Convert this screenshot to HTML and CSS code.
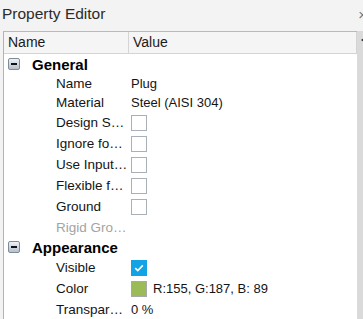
FILE: index.html
```html
<!DOCTYPE html>
<html lang="en">
<head>
    <meta charset="UTF-8">
    <title>Property Editor</title>
    <link rel="stylesheet" href="styles.css">
</head>
<body>
    <div class="panel">
        <div class="titlebar">
            <span class="title">Property Editor</span>
            <span class="close">&times;</span>
        </div>
        <div class="grid">
            <div class="main">
                <div class="head">
                    <div class="hcell hname">Name</div>
                    <div class="hcell">Value</div>
                </div>
                <div class="rows">
                    <!-- General -->
                    <div class="group h20"><span class="toggle"></span><span class="glabel">General</span></div>
                    <div class="row h19"><div class="label">Name</div><div class="value">Plug</div></div>
                    <div class="row h19"><div class="label">Material</div><div class="value">Steel (AISI 304)</div></div>
                    <div class="row h21"><div class="label">Design S…</div><div class="value"><span class="check"></span></div></div>
                    <div class="row h21"><div class="label">Ignore fo…</div><div class="value"><span class="check"></span></div></div>
                    <div class="row h21"><div class="label">Use Input…</div><div class="value"><span class="check"></span></div></div>
                    <div class="row h21"><div class="label">Flexible f…</div><div class="value"><span class="check"></span></div></div>
                    <div class="row h21"><div class="label">Ground</div><div class="value"><span class="check"></span></div></div>
                    <div class="row h20"><div class="label disabled">Rigid Gro…</div><div class="value"></div></div>
                    <!-- Appearance -->
                    <div class="group h20"><span class="toggle"></span><span class="glabel">Appearance</span></div>
                    <div class="row h21"><div class="label">Visible</div><div class="value"><span class="check on">
                        <svg width="10" height="8" viewBox="0 0 10 8"><path d="M1.2 4.2 L3.8 6.6 L8.8 1.4" fill="none" stroke="#fff" stroke-width="1.6"/></svg>
                    </span></div></div>
                    <div class="row h21"><div class="label">Color</div><div class="value"><span class="swatch"></span><span class="rgb">R:155, G:187, B: 89</span></div></div>
                    <div class="row h20"><div class="label">Transpar…</div><div class="value">0 %</div></div>
                    <div class="group h20"><span class="toggle"></span><span class="glabel"></span></div>
                </div>
            </div>
            <div class="scroll"><span class="arrow"></span></div>
        </div>
    </div>
</body>
</html>
```

FILE: styles.css
```css
*{
    margin: 0;
    padding: 0;
    box-sizing: border-box;
}
html, body{
    width: 363px;
    height: 319px;
    overflow: hidden;
    background-color: #f3f3f3;
    font-family: "Liberation Sans", Arial, sans-serif;
    color: #111;
}
.panel{
    width: 363px;
    height: 319px;
    display: flex;
    flex-direction: column;
}

/* title */
.titlebar{
    height: 31px;
    display: flex;
    align-items: flex-start;
    justify-content: space-between;
    padding-left: 2px;
    padding-top: 5px;
}
.title{
    font-size: 15.5px;
    color: #2b2b2b;
}
.close{
    font-size: 15px;
    color: #777;
    margin-right: -4px;
    margin-top: 1px;
}

/* grid */
.grid{
    flex: 1;
    display: flex;
    padding-left: 3px;
    min-height: 0;
}
.main{
    width: 354px;
    border-left: 1px solid #b3b3b3;
    border-top: 1px solid #b9b9b9;
    display: flex;
    flex-direction: column;
    min-height: 0;
}
.head{
    height: 22px;
    display: flex;
    background-color: #f5f5f5;
    border-bottom: 1px solid #d4d4d4;
    border-right: 1px solid #d4d4d4;
    font-size: 14px;
    color: #1a1a1a;
}
.hcell{
    padding-left: 4px;
    line-height: 21px;
}
.hcell.hname{
    width: 125px;
    border-right: 1px solid #d4d4d4;
}
.rows{
    flex: 1;
    background-color: #fff;
    overflow: hidden;
}
.scroll{
    width: 6px;
    background-color: #dadada;
    position: relative;
}
.scroll .arrow{
    position: absolute;
    top: 7px;
    left: 4px;
    width: 0;
    height: 0;
    border-top: 2px solid transparent;
    border-bottom: 2px solid transparent;
    border-right: 3px solid #222;
}

/* rows */
.h19{ height: 19px; }
.h20{ height: 20px; }
.h21{ height: 21px; }
.group{
    display: flex;
    align-items: center;
    padding-left: 4px;
}
.toggle{
    width: 12px;
    height: 12px;
    border: 1px solid #7d8b9b;
    border-radius: 2px;
    background: linear-gradient(#eef1f5, #b6c0cc);
    position: relative;
}
.toggle::after{
    content: "";
    position: absolute;
    left: 2px;
    top: 4px;
    width: 6px;
    height: 2px;
    background-color: #111;
}
.glabel{
    margin-left: 12px;
    font-size: 15px;
    font-weight: bold;
    color: #000;
}
.row{
    display: grid;
    grid-template-columns: 124px 1fr;
    align-items: center;
}
.label{
    padding-left: 52px;
    font-size: 13.5px;
    white-space: nowrap;
    color: #141414;
}
.label.disabled{
    color: #a3a3a3;
}
.value{
    padding-left: 3px;
    font-size: 13px;
    display: flex;
    align-items: center;
    color: #141414;
}
.check{
    width: 16px;
    height: 16px;
    border: 1px solid #aab0b7;
    background-color: #fff;
    display: flex;
    align-items: center;
    justify-content: center;
}
.check.on{
    border-color: #12a3e6;
    background-color: #12a3e6;
}
.swatch{
    width: 16px;
    height: 16px;
    border: 1px solid #a9a9a9;
    background-color: rgb(155, 187, 89);
}
.rgb{
    margin-left: 6px;
}
```
